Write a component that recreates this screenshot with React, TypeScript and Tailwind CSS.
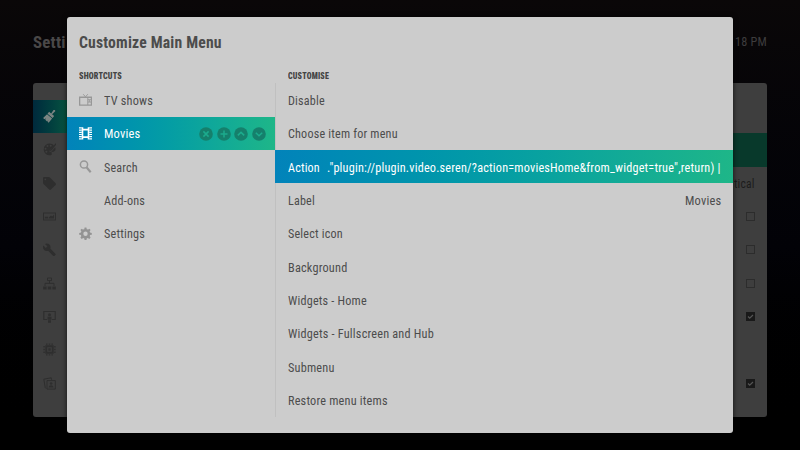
import { useLayoutEffect, useRef, useState, type ReactNode } from "react";

/** Single line of text condensed horizontally to the given width. */
function Fit({ w, className = "", children }: { w: number; className?: string; children: ReactNode }) {
  const ref = useRef<HTMLSpanElement>(null);
  const [scale, setScale] = useState(0.88);
  useLayoutEffect(() => {
    if (ref.current) setScale(w / ref.current.offsetWidth);
  }, [w]);
  return (
    <span className={"block shrink-0 " + className} style={{ width: w }}>
      <span ref={ref} className="inline-block origin-left whitespace-pre" style={{ transform: `scaleX(${scale})` }}>
        {children}
      </span>
    </span>
  );
}

function Svg({ children, className = "" }: { children: ReactNode; className?: string }) {
  return (
    <svg viewBox="0 0 13 13" fill="currentColor" className={"size-[13px] shrink-0 " + className}>
      {children}
    </svg>
  );
}

const icons: Record<string, ReactNode> = {
  tv: (
    <Svg className="text-[#979797]">
      <path d="M4.2.2 6.5 2.8 8.8.2" fill="none" stroke="currentColor" strokeWidth=".9" />
      <path fillRule="evenodd" d="M0 2.6h13v9.2H0zM1.3 3.9v6.6h7V3.9zM9.3 4v1.2h2.5V4zM9.3 6.3v1.2h1V6.3zM11 6.3v1.2h.9V6.3zM9.3 8.6v1.8h2.5V8.6z" />
    </Svg>
  ),
  film: (
    <Svg>
      <path d="M2.7.3h1.6v12.1H2.7zM8.7.3h1.6v12.1H8.7zM4 1.8h5v1.7H4zM4 9.2h5v1.7H4z" />
      <path d="M0 .3h2.8v1.2H0zM0 2.5h2.8v1.2H0zM0 4.7h2.8v1.2H0zM0 6.9h2.8v1.2H0zM0 9.1h2.8v1.2H0zM0 11.2h2.8v1.2H0zM10.2.3H13v1.2h-2.8zM10.2 2.5H13v1.2h-2.8zM10.2 4.7H13v1.2h-2.8zM10.2 6.9H13v1.2h-2.8zM10.2 9.1H13v1.2h-2.8zM10.2 11.2H13v1.2h-2.8z" />
    </Svg>
  ),
  search: (
    <Svg className="text-[#979797]">
      <g fill="none" stroke="currentColor">
        <circle cx="5" cy="4.5" r="3.6" strokeWidth="1.5" />
        <path d="m7.5 7.3 4.2 4.9" strokeWidth="2.1" />
      </g>
    </Svg>
  ),
  none: <span className="w-[13px] shrink-0" />,
  gear: (
    <Svg className="text-[#939393]">
      <circle cx="6.5" cy="6.8" r="3.5" fill="none" stroke="currentColor" strokeWidth="2.6" />
      {[0, 45, 90, 135, 180, 225, 270, 315].map((a) => (
        <path key={a} d="M5.2 2.6 5.6.5h1.8l.4 2.1z" transform={`rotate(${a} 6.5 6.8)`} />
      ))}
    </Svg>
  ),
};

const shortcuts = [
  { icon: "tv", label: "TV shows", w: 49 },
  { icon: "film", label: "Movies", w: 36, active: true },
  { icon: "search", label: "Search", w: 34 },
  { icon: "none", label: "Add-ons", w: 41 },
  { icon: "gear", label: "Settings", w: 41 },
];

const glyphs = ["m4.4 4.4 5.2 5.2M9.6 4.4 4.4 9.6", "M7 3.5v7M3.5 7h7", "m3.8 8.4 3.2-3 3.2 3", "m3.8 5.8 3.2 3 3.2-3"];

const options: { label: string; w: number; value?: string; vw?: number; active?: boolean }[] = [
  { label: "Disable", w: 37 },
  { label: "Choose item for menu", w: 110 },
  {
    label: "Action",
    w: 32,
    value: '."plugin://plugin.video.seren/?action=moviesHome&from_widget=true",return) |',
    vw: 393.5,
    active: true,
  },
  { label: "Label", w: 26.5, value: "Movies", vw: 36 },
  { label: "Select icon", w: 55 },
  { label: "Background", w: 59.5 },
  { label: "Widgets - Home", w: 79 },
  { label: "Widgets - Fullscreen and Hub", w: 145.5 },
  { label: "Submenu", w: 47 },
  { label: "Restore menu items", w: 99.5 },
];

const sideIcons: ReactNode[] = [
  <Svg key="brush" className="text-[#7b8482]">
    <g transform="rotate(40 6.5 6.5)">
      <path d="M5.4-.8c0-1.4 2.2-1.4 2.2 0L7.1 3.2h2.7v2.4H3.2V3.2h2.7zM3.2 6.4h6.6v5.4H8.5l-.6-2v2H5.4l-.5-1.6-.6 1.6H2.6z" />
    </g>
  </Svg>,
  <Svg key="palette">
    <path fillRule="evenodd" d="M6.3.6c2 0 3.5.7 4.6 1.9L6.8 7.2l-.4 2 1.9-.4 3.9-4.5c1 2.8-.4 4.6-2.8 4.6-1.2.1-1.2.8-.7 1.5.4 1-.2 1.8-1.7 1.8A5.8 5.8 0 0 1 .7 6.4 5.8 5.8 0 0 1 6.3.6zM2.5 6.7a1 1 0 1 0 0-2 1 1 0 0 0 0 2zM4.5 4a1 1 0 1 0 0-2 1 1 0 0 0 0 2zM7.7 3.8a1 1 0 1 0 0-2 1 1 0 0 0 0 2zM3.4 9.7a1 1 0 1 0 0-2 1 1 0 0 0 0 2z" />
    <path d="M12.9 0 7.4 6.5 6.9 8.2l1.6-.8L13 1.8z" />
  </Svg>,
  <Svg key="tag">
    <path fillRule="evenodd" d="M0 1.3C0 .6.5 0 1.2 0h4.6c.5 0 .8.2 1.1.5l5.7 5.7c.5.5.5 1.2 0 1.7l-4.7 4.7c-.5.5-1.2.5-1.7 0L.5 6.9C.2 6.6 0 6.3 0 5.8zM2.3 3.2a.9.9 0 1 0 0-1.8.9.9 0 0 0 0 1.8z" />
  </Svg>,
  <Svg key="card">
    <path fillRule="evenodd" d="M0 2.6h13v8H0zM1 3.6v6h11v-6z" />
    <path d="M1.8 6.8h3.4v1.8H1.8zM6 8.6V7.2l2-1.8 1.2 1.2 1.9-2v4z" />
  </Svg>,
  <Svg key="wrench">
    <path d="m12.6 10.9-5.3-5.3c.5-1.3.3-2.9-.9-4A4 4 0 0 0 2 .9l2.4 2.4-1.6 1.6L.4 2.5C-.3 4 0 5.8 1.1 6.9c1.1 1.1 2.6 1.4 4 .9l5.3 5.3c.2.2.6.2.8 0l1.4-1.3c.3-.2.3-.6 0-.9z" />
  </Svg>,
  <Svg key="sitemap">
    <g fill="none" stroke="currentColor">
      <path d="M4.5 1h4v2.6h-4zM6.5 3.6v2.7M2 9V6.3h9V9" />
    </g>
    <path d="M.2 9.4h3.4v3H.2zM4.8 9.4h3.4v3H4.8zM9.4 9.4h3.4v3H9.4z" />
  </Svg>,
  <Svg key="screen">
    <path d="M4 9.5H.8v-8h11.4v8H9" fill="none" stroke="currentColor" strokeWidth="1.1" />
    <circle cx="6.5" cy="4.7" r="1.5" />
    <path d="M4.5 6.7h4v3h-4zM5 10.3h3v2.5H5z" />
  </Svg>,
  <Svg key="chip">
    <path fillRule="evenodd" d="M2.3 2.3h8.4v8.4H2.3zM4.2 4.2v4.6h4.6V4.2z" />
    <path d="M5.3 5.3h2.4v2.4H5.3zM3 .5h1.5v1.3H3zM5.7.5h1.5v1.3H5.7zM8.4.5h1.5v1.3H8.4zM3 11.2h1.5v1.3H3zM5.7 11.2h1.5v1.3H5.7zM8.4 11.2h1.5v1.3H8.4zM.4 3h1.4v1.5H.4zM.4 5.7h1.4v1.5H.4zM.4 8.4h1.4v1.5H.4zM11.2 3h1.4v1.5h-1.4zM11.2 5.7h1.4v1.5h-1.4zM11.2 8.4h1.4v1.5h-1.4z" />
  </Svg>,
  <Svg key="cards">
    <path d="M3 11.5 2.3 10.8.8 2.2 8.2.8l.4 2M4 3.6h8.3v8.5H4z" fill="none" stroke="currentColor" strokeWidth="1" />
    <circle cx="8.1" cy="6.5" r="1.3" />
    <path d="M5.7 10.4c0-3 4.8-3 4.8 0z" />
  </Svg>,
];

const toggles = ["", "row", "text", "off", "off", "off", "on", "", "on"];

function Checkbox({ on }: { on: boolean }) {
  return (
    <span className={"flex size-[9px] " + (on ? "bg-[#191919]" : "border border-[#2c2c2c]")}>
      {on && (
        <svg viewBox="0 0 9 9" className="size-[9px]" fill="none" stroke="#555" strokeWidth="1.2">
          <path d="m2 4.5 1.7 1.7L7 3" />
        </svg>
      )}
    </span>
  );
}

export default function App() {
  return (
    <div className="relative h-[450px] w-[800px] overflow-hidden bg-gradient-to-b from-[#0a0708] via-[#020207] via-55% to-black font-['Roboto_Condensed','Roboto',sans-serif] text-[12.8px] leading-4 tracking-[0.2px]">
      {/* Settings screen behind the dialog */}
      <div className="flex h-full flex-col px-[33.3px] text-[#2e2e2e]">
        <div className="flex h-[83.3px] items-center justify-between text-[#4a4848]">
          <Fit w={32.7} className="text-[17px] font-bold">Setti</Fit>
          <Fit w={31.6} className="pt-px text-[#3d3c3d]">18 PM</Fit>
        </div>
        <div className="flex h-[333.3px] justify-between overflow-hidden rounded-[3px] bg-[#3e3e3e] pt-[16.7px]">
          <div className="w-[150px]">
            {sideIcons.map((icon, i) => (
              <div
                key={i}
                className={
                  "flex h-[33.33px] items-center pl-[10.2px] " +
                  (i === 0 ? "bg-linear-to-r from-[#00293c] to-[#0c5a3f] to-[40px]" : "")
                }
              >
                {icon}
              </div>
            ))}
          </div>
          <div className="w-[150px]">
            {toggles.map((t, i) => (
              <div
                key={i}
                className={"flex h-[33.33px] items-center justify-end pr-[12px] " + (i === 1 ? "bg-[#08392b]" : "")}
              >
                {t === "text" && <Fit w={20.8} className="pt-[2px] text-[#1c1c1c]">tical</Fit>}
                {(t === "on" || t === "off") && <Checkbox on={t === "on"} />}
              </div>
            ))}
          </div>
        </div>
      </div>

      {/* Dialog */}
      <div className="absolute top-[16.7px] left-[66.7px] flex h-[416.6px] w-[666.6px] flex-col overflow-hidden rounded-[3px] bg-[#cccccc] text-[#4c4c4c] shadow-[0_0_5px_rgba(0,0,0,0.7)]">
        <div className="flex h-[51px] items-center pt-[2px] pl-[12.3px]">
          <Fit w={142.5} className="text-[16.5px] font-bold">Customize Main Menu</Fit>
        </div>
        <div className="flex h-[15.7px] items-center text-[8.4px] leading-[10px] font-black text-[#444]">
          <div className="w-[208.6px] pl-[12.3px]"><Fit w={42.5}>SHORTCUTS</Fit></div>
          <div className="pl-[12.3px]"><Fit w={41}>CUSTOMISE</Fit></div>
        </div>
        <div className="flex h-[333.3px]">
          <div className="w-[208.3px]">
            {shortcuts.map((s) => (
              <div
                key={s.label}
                className={
                  "flex h-[33.33px] items-center pl-[12.3px] " +
                  (s.active ? "bg-linear-to-r from-[#0283ba] to-[#1eb688] text-white" : "")
                }
              >
                {icons[s.icon]}
                <Fit w={s.w} className="ml-[12px] pt-[2px]">{s.label}</Fit>
                {s.active && (
                  <div className="ml-auto flex gap-[3.5px] pt-px pr-[9px]">
                    {glyphs.map((d) => (
                      <svg key={d} viewBox="0 0 14 14" className="size-[14px]">
                        <circle cx="7" cy="7" r="6.8" fill="#15806c" />
                        <path d={d} fill="none" stroke="#1cab8d" strokeWidth="1.5" />
                      </svg>
                    ))}
                  </div>
                )}
              </div>
            ))}
          </div>
          <div className="flex-1 shadow-[inset_1px_0_0_#c0c0c0]">
            {options.map((o) => (
              <div
                key={o.label}
                className={
                  "flex h-[33.33px] items-center justify-between pr-[12.6px] pl-[12.8px] " +
                  (o.active ? "bg-linear-to-r from-[#0283ba] to-[#1eb688] text-white" : "")
                }
              >
                <Fit w={o.w} className="pt-[2px]">{o.label}</Fit>
                {o.value && <Fit w={o.vw ?? 0} className="pt-[2px]">{o.value}</Fit>}
              </div>
            ))}
          </div>
        </div>
      </div>
    </div>
  );
}
